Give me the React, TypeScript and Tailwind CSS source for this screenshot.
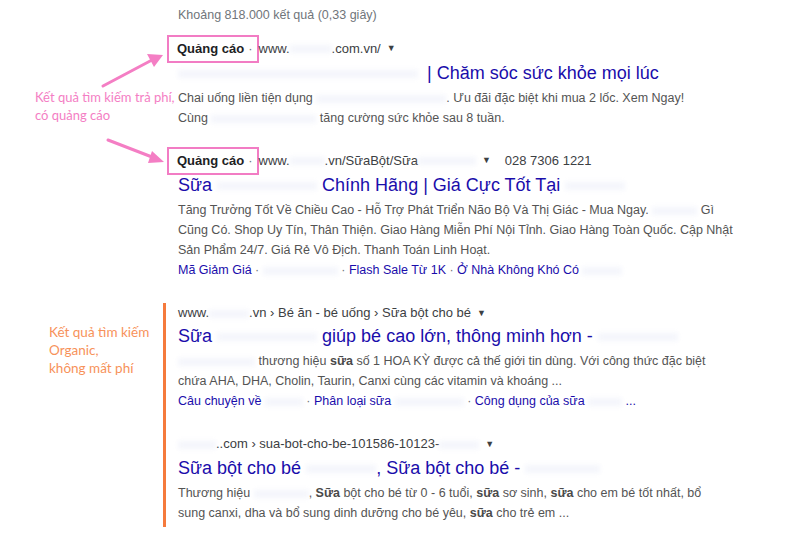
import React from 'react';

const Blur = ({ w }: { w: string }) => (
  <span className={`inline-block align-middle h-[8px] ${w} bg-[#e4e7f6] blur-[2.5px] opacity-40`} />
);

const Caret = () => <span className="ml-[6px] text-[9px] text-[#3c4043] align-[1px]">▼</span>;

const AdLabel = () => (
  <span className="inline-flex items-center h-[28px] border-[2.5px] border-[#f27cc4] pl-[8px] pr-[4px] -ml-[11px]">
    <b className="font-bold text-[#202124]">Quảng cáo</b>
    <span className="ml-[4px] text-[#70757a]">·</span>
  </span>
);

export default function App() {
  return (
    <div className="relative w-[800px] h-[541px] bg-white overflow-hidden font-['Liberation_Sans',Arial,sans-serif] text-[12.5px]">
      <div className="grid grid-cols-[163px_1fr]">
        {/* Results count */}
        <div />
        <div className="pl-[15px] pt-[5px] h-[35px] leading-[20px] text-[#70757a]">Khoảng 818.000 kết quả (0,33 giây)</div>

        {/* Paid annotation */}
        <div className="pl-[35px] pt-[53px] font-['Lato',sans-serif] text-[13px] leading-[18px] text-[#f47ec4] whitespace-nowrap">
          Kết quả tìm kiếm trả phí,
          <br />
          có quảng cáo
        </div>

        {/* Ads */}
        <div className="pl-[15px] whitespace-nowrap">
          <div className="flex items-center h-[28px] text-[13px] text-[#3c4043]">
            <AdLabel />
            <span>www.</span>
            <Blur w="w-[42px]" />
            <span>.com.vn/</span>
            <Caret />
          </div>
          <div className="h-[20px] leading-[20px] text-[18px] text-[#1a0dab]">
            <Blur w="w-[240px]" /> <span className="ml-[4px]">| Chăm sóc sức khỏe mọi lúc</span>
          </div>
          <div className="mt-[5px] leading-[20px] text-[#545454]">
            Chai uống liền tiện dụng <Blur w="w-[130px]" />. Ưu đãi đặc biệt khi mua 2 lốc. Xem Ngay!
            <br />
            Cùng <Blur w="w-[105px]" /> tăng cường sức khỏe sau 8 tuần.
          </div>

          <div className="mt-[19px] flex items-center h-[28px] text-[13px] text-[#3c4043]">
            <AdLabel />
            <span>www.</span>
            <Blur w="w-[35px]" />
            <span>.vn/SữaBột/Sữa</span>
            <Blur w="w-[58px]" />
            <Caret />
            <span className="ml-[14px]">028 7306 1221</span>
          </div>
          <div className="h-[20px] leading-[20px] text-[18px] text-[#1a0dab]">
            Sữa <Blur w="w-[100px]" /> Chính Hãng | Giá Cực Tốt Tại <Blur w="w-[60px]" />
          </div>
          <div className="mt-[5px] leading-[20px] text-[#545454]">
            Tăng Trưởng Tốt Về Chiều Cao - Hỗ Trợ Phát Triển Não Bộ Và Thị Giác - Mua Ngay. <Blur w="w-[45px]" /> Gì
            <br />
            Cũng Có. Shop Uy Tín, Thân Thiện. Giao Hàng Miễn Phí Nội Tỉnh. Giao Hàng Toàn Quốc. Cập Nhật
            <br />
            Sản Phẩm 24/7. Giá Rẻ Vô Địch. Thanh Toán Linh Hoạt.
          </div>
          <div className="leading-[20px] text-[#1a0dab]">
            Mã Giảm Giá <span className="text-[#70757a]">·</span> <Blur w="w-[75px]" />{' '}
            <span className="text-[#70757a]">·</span> Flash Sale Từ 1K <span className="text-[#70757a]">·</span> Ở Nhà
            Không Khó Có <Blur w="w-[40px]" />
          </div>
        </div>

        {/* Organic annotation */}
        <div className="mt-[23px] pl-[49px] pt-[20px] font-['Lato',sans-serif] text-[13.5px] leading-[18px] text-[#f7925a]">
          Kết quả tìm kiếm
          <br />
          Organic,
          <br />
          không mất phí
        </div>

        {/* Organic results */}
        <div className="mt-[23px] border-l-[3px] border-[#f57a3c] pl-[12px] pb-[4px] whitespace-nowrap">
          <div className="h-[20px] leading-[20px] text-[13px] text-[#3c4043]">
            www.<Blur w="w-[40px]" />.vn › Bé ăn - bé uống › Sữa bột cho bé
            <Caret />
          </div>
          <div className="mt-[3px] h-[20px] leading-[20px] text-[18px] text-[#1a0dab]">
            Sữa <Blur w="w-[100px]" /> giúp bé cao lớn, thông minh hơn - <Blur w="w-[80px]" />
          </div>
          <div className="mt-[5px] leading-[20px] text-[#545454]">
            <Blur w="w-[77px]" /> thương hiệu <b className="text-[#4a4a4a]">sữa</b> số 1 HOA KỲ được cả thế giới tin dùng. Với công
            thức đặc biệt
            <br />
            chứa AHA, DHA, Cholin, Taurin, Canxi cùng các vitamin và khoáng ...
          </div>
          <div className="leading-[20px] text-[#1a0dab]">
            Câu chuyện về <Blur w="w-[38px]" /> <span className="text-[#70757a]">·</span> Phân loại sữa{' '}
            <Blur w="w-[69px]" /> <span className="text-[#70757a]">·</span> Công dụng của sữa <Blur w="w-[34px]" /> ...
          </div>

          <div className="mt-[23px] h-[20px] leading-[20px] text-[13px] text-[#3c4043]">
            <Blur w="w-[38px]" />
            ..com › sua-bot-cho-be-101586-10123-
            <Blur w="w-[40px]" />
            <Caret />
          </div>
          <div className="mt-[4px] h-[20px] leading-[20px] text-[18px] text-[#1a0dab]">
            Sữa bột cho bé <Blur w="w-[70px]" />, Sữa bột cho bé - <Blur w="w-[75px]" />
          </div>
          <div className="mt-[5px] leading-[20px] text-[#545454]">
            Thương hiệu <Blur w="w-[55px]" />, <b className="text-[#4a4a4a]">Sữa</b> bột cho bé từ 0 - 6 tuổi,{' '}
            <b className="text-[#4a4a4a]">sữa</b> sơ sinh, <b className="text-[#4a4a4a]">sữa</b> cho em bé tốt nhất, bổ
            <br />
            sung canxi, dha và bổ sung dinh dưỡng cho bé yêu, <b className="text-[#4a4a4a]">sữa</b> cho trẻ em ...
          </div>
        </div>
      </div>

      {/* Pointer arrows */}
      <svg className="absolute inset-0 pointer-events-none" width="800" height="541">
        <g stroke="#f47ec4" strokeWidth="3" strokeLinecap="round">
          <line x1="103" y1="86" x2="152" y2="60" />
          <line x1="108" y1="140" x2="152" y2="157" />
        </g>
        <g fill="#f47ec4">
          <polygon points="163,55 147,54 154,67" />
          <polygon points="164,162 152,151 148,163" />
        </g>
      </svg>
    </div>
  );
}
